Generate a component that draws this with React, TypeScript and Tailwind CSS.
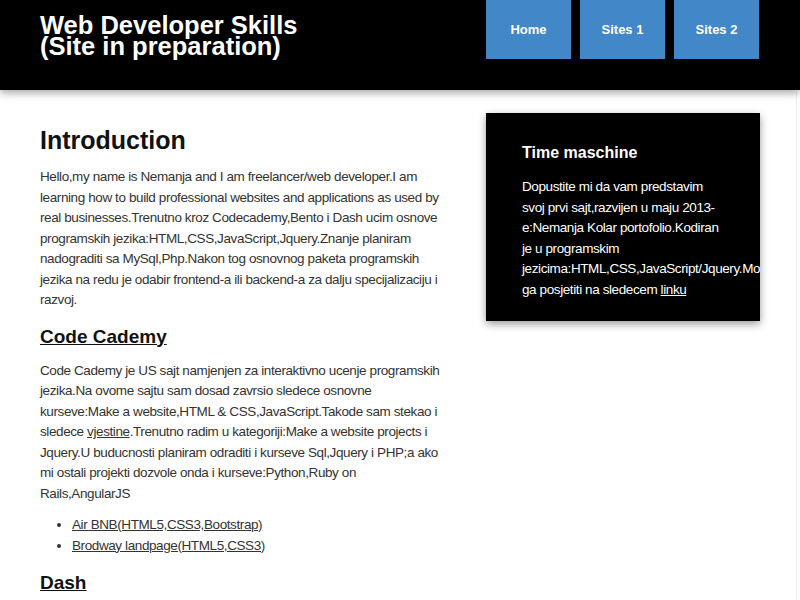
import React from 'react';

const navItems = ['Home', 'Sites 1', 'Sites 2'];

export default function App() {
  return (
    <div className="min-h-[600px] bg-white font-['Liberation_Sans',Arial,sans-serif] text-[#333]">
      {/* Header */}
      <header className="relative z-10 flex h-[90px] bg-black pl-10 shadow-[0_3px_8px_rgba(0,0,0,0.35)]">
        <div className="w-[446px] shrink-0 pt-[15px] text-[25.5px] font-bold leading-[21px] text-white">
          Web Developer Skills
          <br />
          (Site in preparation)
        </div>
        <nav className="flex gap-[9px]">
          {navItems.map((item) => (
            <a
              key={item}
              href="#"
              className="flex h-[59px] w-[85px] items-center justify-center bg-[#4287c8] text-[13px] font-bold text-white"
            >
              {item}
            </a>
          ))}
        </nav>
      </header>

      <div className="mr-[3px] flex border-r border-[#ebebeb] px-10">
        {/* Main column */}
        <main className="w-[410px] shrink-0 pt-[35px] pb-10">
          <h1 className="text-[25px] font-bold leading-[30px] text-[#111]">Introduction</h1>
          <p className="mt-[12px] w-[406px] text-[13.5px] leading-[20.5px] tracking-[-0.4px]">
            Hello,my name is Nemanja and I am freelancer/web developer.I am learning how to build
            professional websites and applications as used by real businesses.Trenutno kroz
            Codecademy,Bento i Dash ucim osnove programskih jezika:HTML,CSS,JavaScript,Jquery.Znanje
            planiram nadograditi sa MySql,Php.Nakon tog osnovnog paketa programskih jezika na redu je
            odabir frontend-a ili backend-a za dalju specijalizaciju i razvoj.
          </p>

          <h2 className="mt-[14px] text-[19px] font-bold leading-[23px] text-[#111]">
            <a href="#" className="underline">Code Cademy</a>
          </h2>
          <p className="mt-[13px] w-[406px] text-[13.5px] leading-[20.5px] tracking-[-0.4px]">
            Code Cademy je US sajt namjenjen za interaktivno ucenje programskih jezika.Na ovome sajtu
            sam dosad zavrsio sledece osnovne kurseve:Make a website,HTML &amp; CSS,JavaScript.Takode sam
            stekao i sledece <a href="#" className="underline">vjestine</a>.Trenutno radim u
            kategoriji:Make a website projects i Jquery.U buducnosti planiram odraditi i kurseve
            Sql,Jquery i PHP;a ako mi ostali projekti dozvole onda i kurseve:Python,Ruby on
            Rails,AngularJS
          </p>
          <ul className="mt-[11px] list-disc pl-[32px] text-[13.5px] leading-[20.5px] tracking-[-0.4px]">
            <li>
              <a href="#" className="underline">Air BNB(HTML5,CSS3,Bootstrap)</a>
            </li>
            <li>
              <a href="#" className="underline">Brodway landpage(HTML5,CSS3)</a>
            </li>
          </ul>

          <h2 className="mt-[15px] text-[19px] font-bold leading-[23px] text-[#111]">
            <a href="#" className="underline">Dash</a>
          </h2>
        </main>

        {/* Sidebar */}
        <aside className="ml-[36px] mt-[23px] shrink-0 self-start">
          <div className="w-[274px] overflow-hidden bg-black pt-[30px] pb-[21px] pl-[36px] pr-[36px] text-white shadow-[0_3px_8px_rgba(0,0,0,0.4)]">
            <h3 className="text-[16px] font-bold leading-[20px]">Time maschine</h3>
            <p className="mt-[14px] text-[13.5px] leading-[20.5px] tracking-[-0.4px]">
              Dopustite mi da vam predstavim svoj prvi sajt,razvijen u maju 2013-e:Nemanja Kolar
              portofolio.Kodiran je u programskim jezicima:HTML,CSS,JavaScript/Jquery.Mozete ga
              posjetiti na sledecem <a href="#" className="underline">linku</a>
            </p>
          </div>
        </aside>
      </div>
    </div>
  );
}
